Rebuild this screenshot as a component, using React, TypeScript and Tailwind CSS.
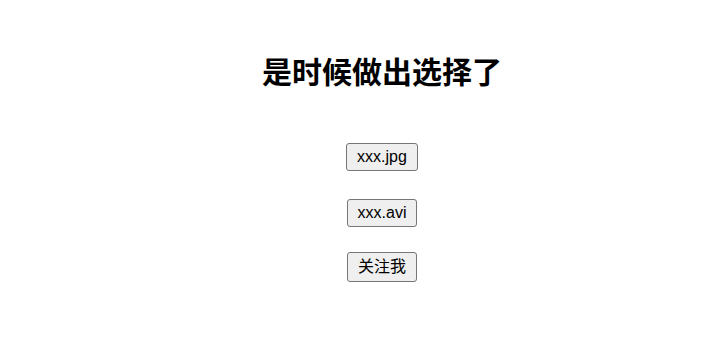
export default function App() {
  const btn =
    "border border-[#767676] rounded-[3px] bg-[#efefef] px-[10px] py-[4px] text-[16px] text-black";
  return (
    <div
      className="w-[705px] h-[353px] bg-white pl-[59px] flex flex-col items-center"
      style={{ fontFamily: '"Liberation Sans", Arial, "Noto Sans CJK SC", sans-serif' }}
    >
      <h1 className="mt-[50px] text-[30px] leading-[40px] font-bold text-black" style={{ fontFamily: '"Noto Sans CJK SC", sans-serif' }}>
        是时候做出选择了
      </h1>
      <div className="mt-[53px] flex flex-col items-center">
        <button className={btn + " leading-[18px]"}>xxx.jpg</button>
        <button className={btn + " leading-[18px] mt-[28px]"}>xxx.avi</button>
        <button className={btn + " leading-[20px] mt-[25px] px-[9px]"}>关注我</button>
      </div>
    </div>
  );
}
